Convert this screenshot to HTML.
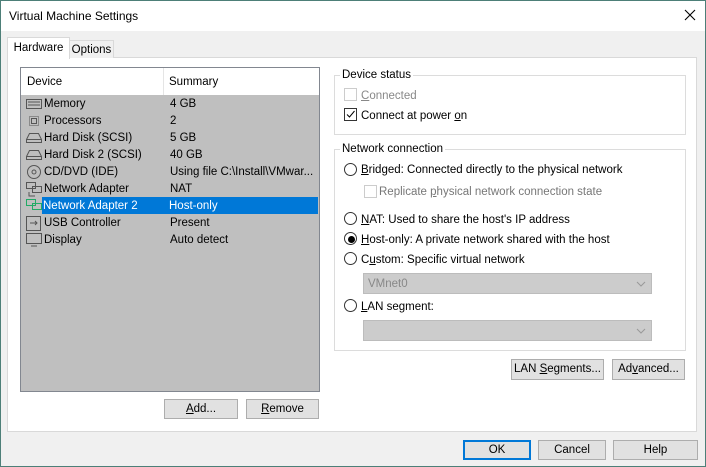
<!DOCTYPE html>
<html><head><style>
*{margin:0;padding:0;box-sizing:border-box}
body{width:706px;height:467px;overflow:hidden;background:#f0f0f0;font-family:"Liberation Sans",sans-serif;font-size:11.5px;color:#000;position:relative}
.a{position:absolute;white-space:nowrap}
.btn{position:absolute;background:#e1e1e1;border:1px solid #adadad;text-align:center;line-height:19px}
.u{text-decoration:underline}
.grp{position:absolute;border:1px solid #dcdcdc}
.gl{position:absolute;background:#fff;padding:0 2px;top:-8px;left:5px;line-height:14px}
.cb{position:absolute;width:13px;height:13px;border:1px solid #333;background:#fff}
.rd{position:absolute;width:13px;height:13px;border:1px solid #333;border-radius:50%;background:#fff}
.row{position:absolute;left:1px;width:297px;height:17px;line-height:19px}
.row span{position:absolute}
.combo{position:absolute;background:#ccc;border:1px solid #bcbcbc;color:#888;padding-left:4px;line-height:20px}
.t{position:absolute;white-space:nowrap;margin-top:2px}
</style></head><body>
<div class="a" style="left:0;top:0;width:706px;height:467px;border:1px solid #4d7f78"></div>
<div class="a" style="left:1px;top:1px;width:704px;height:30px;background:#fff"></div>
<div class="a" style="left:9px;top:9px;font-size:12px">Virtual Machine Settings</div>
<svg class="a" style="left:684px;top:9px" width="12" height="12"><path d="M1 1L11 11M11 1L1 11" stroke="#000" stroke-width="1.1"/></svg>
<div class="a" style="left:7px;top:57px;width:690px;height:375px;background:#fff;border:1px solid #d9d9d9"></div>
<div class="a" style="left:69px;top:40px;width:45px;height:18px;background:#f0f0f0;border:1px solid #d9d9d9;border-bottom:none;text-align:center;line-height:19px">Options</div>
<div class="a" style="left:7px;top:37px;width:63px;height:22px;background:#fff;border:1px solid #d9d9d9;border-bottom:none;text-align:center;line-height:20px">Hardware</div>
<!-- list -->
<div class="a" style="left:20px;top:67px;width:300px;height:325px;background:#bfbfbf;border:1px solid #828790">
<div class="a" style="left:0;top:0;width:298px;height:27px;background:#fff"></div>
<div class="a" style="left:142px;top:0;width:1px;height:27px;background:#e5e5e5"></div>
<div class="a" style="left:6px;top:8px">Device</div>
<div class="a" style="left:148px;top:8px">Summary</div>
<div class="row" style="top:27px"><span style="left:22px">Memory</span><span style="left:148px">4 GB</span></div>
<div class="row" style="top:44px"><span style="left:22px">Processors</span><span style="left:148px">2</span></div>
<div class="row" style="top:61px"><span style="left:22px">Hard Disk (SCSI)</span><span style="left:148px">5 GB</span></div>
<div class="row" style="top:78px"><span style="left:22px">Hard Disk 2 (SCSI)</span><span style="left:148px">40 GB</span></div>
<div class="row" style="top:95px"><span style="left:22px">CD/DVD (IDE)</span><span style="left:148px">Using file C:\Install\VMwar...</span></div>
<div class="row" style="top:112px"><span style="left:22px">Network Adapter</span><span style="left:148px">NAT</span></div>
<div class="row" style="top:129px;left:21px;width:276px;background:#0078d7;color:#fff"><span style="left:1px">Network Adapter 2</span><span style="left:127px">Host-only</span></div>
<div class="row" style="top:146px"><span style="left:22px">USB Controller</span><span style="left:148px">Present</span></div>
<div class="row" style="top:163px"><span style="left:22px">Display</span><span style="left:148px">Auto detect</span></div>
<svg class="a" style="left:5px;top:28px" width="16" height="153" fill="none" stroke="#555">
<rect x="0.5" y="3.5" width="15" height="9"/><path d="M2 6h12M2 9h12"/>
<rect x="3.5" y="20.5" width="9" height="9" stroke-dasharray="1 1"/><rect x="5.5" y="22.5" width="5" height="5"/>
<path d="M0.5 46.5h15v-3l-3-6h-9l-3 6z"/><path d="M0.5 43.5h15"/>
<path d="M0.5 63.5h15v-3l-3-6h-9l-3 6z"/><path d="M0.5 60.5h15"/>
<circle cx="8" cy="76" r="6.5"/><circle cx="8" cy="76" r="2"/>
<rect x="0.5" y="86.5" width="9" height="6"/><rect x="6.5" y="90.5" width="9" height="6"/><path d="M3 96v4h6"/>
<rect x="0.5" y="103.5" width="9" height="6" stroke="#2a6"/><rect x="6.5" y="107.5" width="9" height="6" stroke="#2a6"/>
<rect x="0.5" y="120.5" width="14" height="14"/><path d="M4 127h7M9 125l2 2-2 2"/>
<rect x="0.5" y="137.5" width="15" height="10"/><path d="M5 150h6"/>
</svg>
</div>
<div class="btn" style="left:164px;top:399px;width:74px;height:20px"><span class="u">A</span>dd...</div>
<div class="btn" style="left:246px;top:399px;width:73px;height:20px"><span class="u">R</span>emove</div>
<!-- device status -->
<div class="grp" style="left:334px;top:75px;width:352px;height:60px"><div class="gl">Device status</div></div>
<div class="cb" style="left:344px;top:88px;border-color:#ccc"></div>
<div class="t" style="left:361px;top:88px;color:#888"><span class="u">C</span>onnected</div>
<div class="cb" style="left:344px;top:108px"></div>
<svg class="a" style="left:345px;top:109px" width="11" height="11"><path d="M2 5.5l2.5 2.5 5-6" stroke="#000" fill="none"/></svg>
<div class="t" style="left:361px;top:108px">Connect at power <span class="u">o</span>n</div>
<!-- network -->
<div class="grp" style="left:334px;top:149px;width:352px;height:202px"><div class="gl">Network connection</div></div>
<div class="rd" style="left:344px;top:163px"></div>
<div class="t" style="left:361px;top:162px"><span class="u">B</span>ridged: Connected directly to the physical network</div>
<div class="cb" style="left:364px;top:185px;border-color:#ccc"></div>
<div class="t" style="left:379px;top:184px;color:#777">Replicate <span class="u">p</span>hysical network connection state</div>
<div class="rd" style="left:344px;top:212px"></div>
<div class="t" style="left:361px;top:212px"><span class="u">N</span>AT: Used to share the host's IP address</div>
<div class="rd" style="left:344px;top:232px"></div>
<div class="a" style="left:348px;top:236px;width:7px;height:7px;border-radius:50%;background:#000"></div>
<div class="t" style="left:361px;top:232px"><span class="u">H</span>ost-only: A private network shared with the host</div>
<div class="rd" style="left:344px;top:252px"></div>
<div class="t" style="left:361px;top:252px">C<span class="u">u</span>stom: Specific virtual network</div>
<div class="combo" style="left:363px;top:273px;width:289px;height:21px">VMnet0</div>
<svg class="a" style="left:636px;top:280px" width="10" height="8"><path d="M1 2l4 4 4-4" stroke="#999" fill="none"/></svg>
<div class="rd" style="left:344px;top:299px"></div>
<div class="t" style="left:361px;top:299px"><span class="u">L</span>AN segment:</div>
<div class="combo" style="left:363px;top:320px;width:289px;height:21px"></div>
<svg class="a" style="left:636px;top:327px" width="10" height="8"><path d="M1 2l4 4 4-4" stroke="#999" fill="none"/></svg>
<div class="btn" style="left:511px;top:359px;width:93px;height:21px">LAN <span class="u">S</span>egments...</div>
<div class="btn" style="left:612px;top:359px;width:73px;height:21px">Ad<span class="u">v</span>anced...</div>
<!-- bottom -->
<div class="btn" style="left:463px;top:440px;width:68px;height:20px;border:2px solid #0078d7;line-height:17px">OK</div>
<div class="btn" style="left:538px;top:440px;width:68px;height:20px">Cancel</div>
<div class="btn" style="left:613px;top:440px;width:85px;height:20px">Help</div>
</body></html>
